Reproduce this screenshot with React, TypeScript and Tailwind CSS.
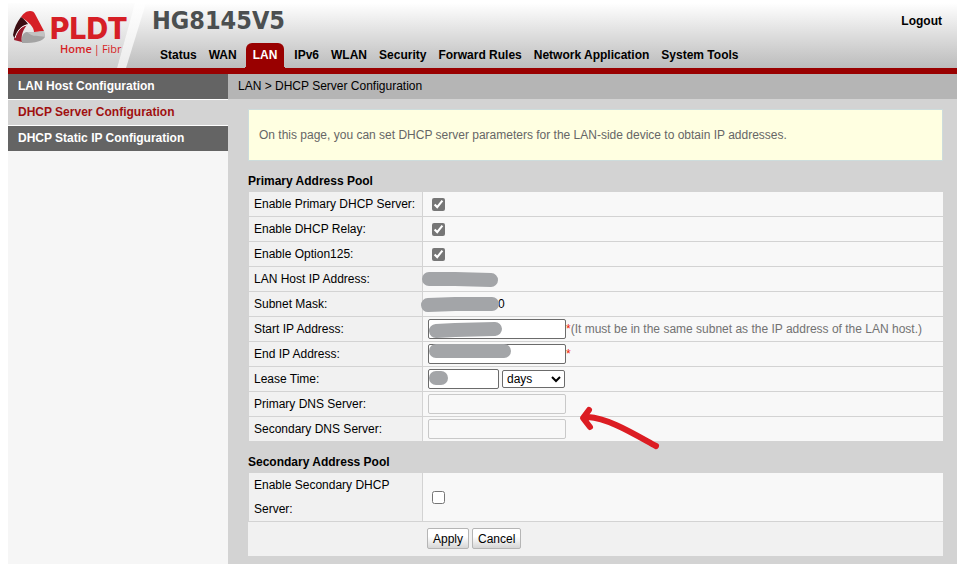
import type { ReactNode } from "react"

const NAV_ITEMS = ["Status", "WAN", "LAN", "IPv6", "WLAN", "Security", "Forward Rules", "Network Application", "System Tools"]
const SIDE_ITEMS = ["LAN Host Configuration", "DHCP Server Configuration", "DHCP Static IP Configuration"]

const ACTIVE_NAV = "LAN"
const ACTIVE_SIDE = "DHCP Server Configuration"

const inputClass = "h-5 rounded-xs border border-[#6b6b6b] bg-white px-1"
const disabledInputClass = "h-5 w-[138px] rounded-xs border border-[#c9c9c9] bg-[#f8f8f8] px-1"
const buttonClass =
    "h-[21px] rounded-xs border border-[#b5b5b5] bg-linear-to-b from-white from-40% to-[#d6d6d6] px-[5px] leading-4"

function Logo() {
    return (
        <div className="relative w-[138px] shrink-0">
            <svg className="absolute inset-0 h-full w-full" viewBox="0 0 138 65" preserveAspectRatio="none" aria-hidden="true">
                <defs>
                    <linearGradient id="panel" x1="0" y1="0" x2="0" y2="1">
                        <stop offset="0" stopColor="#fdfdfd" />
                        <stop offset="1" stopColor="#cccccc" />
                    </linearGradient>
                    <linearGradient id="slash" x1="0" y1="0" x2="0" y2="1">
                        <stop offset="0" stopColor="#ffffff" />
                        <stop offset="1" stopColor="#ececec" />
                    </linearGradient>
                </defs>
                <path d="M0 0H127L109 65H0Z" fill="url(#panel)" />
                <path d="M127 0H138L118 65H109Z" fill="url(#slash)" />
            </svg>
            <div className="relative flex items-start gap-1 pt-2 pl-[5px]">
                <svg width="33" height="33" viewBox="0 0 33 33" aria-hidden="true">
                    <path d="M8 6C10 3 13 0 17 0C20 0 21 1 22 3L31 20L21 21C21 16 16 11 8 6Z" fill="#d61f26" />
                    <path d="M8 6C4 11 1 17 0 24L2 29C3 21 8 15 15 13C13 10 11 8 8 6Z" fill="#3a0d12" />
                    <path d="M14 14C8 15 4 20 1 29L9 31C8 26 9 20 14 14Z" fill="#9e1c2c" />
                    <path d="M14 14C8 15 4 20 2 27" fill="none" stroke="#ffffff" strokeWidth="1" />
                    <path d="M9 32C8 26 10 21 14 21C20 22 26 21 31 20L32 26C29 30 24 32 9 32Z" fill="#a3a3a3" />
                    <path d="M14 21C20 22 26 21 31 20L32 26C26 24 20 27 14 21Z" fill="#c2c2c2" />
                </svg>
                <div className="text-[#d61f26]">
                    <div className="pt-px font-['Inter',sans-serif] text-[30px] leading-8 font-extrabold">PLDT</div>
                    <div className="flex gap-0.5 pl-2.5 font-['Open_Sans',sans-serif] text-[11px] leading-2.5">
                        <span className="font-semibold">Home</span>
                        <span>|</span>
                        <span>Fibr</span>
                    </div>
                </div>
            </div>
        </div>
    )
}

function ActiveTab({ label }: { label: string }) {
    return (
        <a
            href="#"
            className="relative mr-1 ml-[3px] rounded-t-md bg-[#990000] px-[7px] leading-[25px] font-bold text-white before:absolute before:bottom-0 before:-left-[3px] before:size-[3px] before:bg-[radial-gradient(circle_at_0_0,transparent_3px,#990000_3px)] after:absolute after:-right-[3px] after:bottom-0 after:size-[3px] after:bg-[radial-gradient(circle_at_100%_0,transparent_3px,#990000_3px)]"
        >
            {label}
        </a>
    )
}

function Header() {
    return (
        <header className="flex h-[71px] border-b-6 border-[#990000] bg-linear-to-b from-white to-[#bcbcbc]">
            <Logo />
            <div className="flex flex-1 flex-col justify-between pl-1.5">
                <div className="flex items-center justify-between pr-[15px]">
                    <h1 className="font-['DejaVu_Sans_Condensed','DejaVu_Sans',sans-serif] text-[25px] leading-[35px] font-bold text-[#4b4f50]">
                        HG8145V5
                    </h1>
                    <a href="#logout" className="font-bold">
                        Logout
                    </a>
                </div>
                <nav className="flex pl-0.5">
                    {NAV_ITEMS.map((item) =>
                        item === ACTIVE_NAV ? (
                            <ActiveTab key={item} label={item} />
                        ) : (
                            <a key={item} href="#" className="px-1.5 leading-[25px] font-bold">
                                {item}
                            </a>
                        ),
                    )}
                </nav>
            </div>
        </header>
    )
}

function Sidebar() {
    return (
        <aside className="w-[220px] shrink-0 bg-[#f6f6f6]">
            <nav className="flex flex-col gap-px bg-white">
                {SIDE_ITEMS.map((item) => (
                    <a
                        key={item}
                        href="#"
                        className={
                            item === ACTIVE_SIDE
                                ? "bg-[#d3d3d3] pl-2.5 leading-[25px] font-bold text-[#a01010]"
                                : "bg-[#646464] pl-2.5 leading-[25px] font-bold text-white"
                        }
                    >
                        {item}
                    </a>
                ))}
            </nav>
        </aside>
    )
}

// Hand-drawn marker stroke that hides a value
function Marker({ d }: { d: string }) {
    return (
        <svg className="pointer-events-none absolute top-0 -left-2 h-6 w-24" viewBox="0 0 96 24" aria-hidden="true">
            <path d={d} fill="none" stroke="#a3a5a8" strokeWidth="14" strokeLinecap="round" strokeLinejoin="round" />
        </svg>
    )
}

function PoolTable({ title, children }: { title: string; children: ReactNode }) {
    return (
        <section>
            <h2 className="leading-5 font-bold">{title}</h2>
            <div className="pt-px pl-px">
                <table className="w-full table-fixed border-separate border-spacing-0">
                    <tbody>{children}</tbody>
                </table>
            </div>
        </section>
    )
}

function Row({ id, label, children }: { id?: string; label: string; children: ReactNode }) {
    return (
        <tr className="group">
            <th scope="row" className="w-[174px] border-r border-b border-[#d3d3d3] bg-[#f1f1f1] pl-[5px] text-left font-normal group-last:border-b-0">
                <label htmlFor={id} className="block leading-6">
                    {label}
                </label>
            </th>
            <td className="relative border-b border-[#d3d3d3] bg-[#f8f8f8] pl-[5px] group-last:border-b-0">
                <div className="flex items-center">{children}</div>
            </td>
        </tr>
    )
}

function CheckRow({ id, label, checked = false }: { id: string; label: string; checked?: boolean }) {
    return (
        <Row id={id} label={label}>
            <input id={id} type="checkbox" defaultChecked={checked} className="ml-1 size-[13px] accent-[#767676]" />
        </Row>
    )
}

function Arrow() {
    return (
        <svg className="pointer-events-none absolute -bottom-3 left-[328px] h-12 w-[88px]" viewBox="0 0 88 48" aria-hidden="true">
            <path
                d="M80 41C58 29 32 13 12 12M13 5L7 13L14 22"
                fill="none"
                stroke="#dc1d23"
                strokeWidth="6"
                strokeLinecap="round"
                strokeLinejoin="round"
            />
            <path d="M12 5L5 13L14 23L12 13Z" fill="#dc1d23" />
        </svg>
    )
}

export default function App() {
    return (
        <div className="flex min-h-screen flex-col bg-white pt-[3px] pl-2 font-['Liberation_Sans',Arial,sans-serif] text-xs text-black">
            <Header />
            <div className="flex flex-1">
                <Sidebar />
                <main className="flex-1 bg-[#d3d3d3]">
                    <div className="bg-[#b5b5b5] pl-2.5 leading-[25px]">LAN &gt; DHCP Server Configuration</div>

                    <div className="pt-2.5 pr-3.5 pb-2 pl-5">
                        <p className="mb-2.5 border border-[#cddcdc] bg-[#ffffe1] px-2.5 leading-[50px] text-[#666666]">
                            On this page, you can set DHCP server parameters for the LAN-side device to obtain IP addresses.
                        </p>

                        <div className="relative">
                            <PoolTable title="Primary Address Pool">
                                <CheckRow id="primary" label="Enable Primary DHCP Server:" checked />
                                <CheckRow id="relay" label="Enable DHCP Relay:" checked />
                                <CheckRow id="option125" label="Enable Option125:" checked />
                                <Row label="LAN Host IP Address:">
                                    <Marker d="M14 12L40 12L76 13" />
                                </Row>
                                <Row label="Subnet Mask:">
                                    <Marker d="M13 13L40 12L77 12" />
                                    <span className="pl-[70px]">0</span>
                                </Row>
                                <Row id="start-ip" label="Start IP Address:">
                                    <input id="start-ip" type="text" className={`${inputClass} w-[138px]`} />
                                    <Marker d="M21 14L40 13L80 12" />
                                    <span className="text-[#ee2200]">*</span>
                                    <span className="text-[#727272]">(It must be in the same subnet as the IP address of the LAN host.)</span>
                                </Row>
                                <Row id="end-ip" label="End IP Address:">
                                    <input id="end-ip" type="text" className={`${inputClass} w-[138px]`} />
                                    <Marker d="M21 9L50 9L89 9" />
                                    <span className="text-[#ee2200]">*</span>
                                </Row>
                                <Row id="lease" label="Lease Time:">
                                    <input id="lease" type="text" className={`${inputClass} w-[71px]`} />
                                    <Marker d="M21 11L26 11" />
                                    <select
                                        aria-label="Lease time unit"
                                        className="ml-[3px] h-[18px] w-[63px] appearance-auto rounded-xs border border-[#6b6b6b] bg-white"
                                    >
                                        <option>days</option>
                                        <option>hours</option>
                                        <option>minutes</option>
                                    </select>
                                </Row>
                                <Row id="dns1" label="Primary DNS Server:">
                                    <input id="dns1" type="text" disabled className={disabledInputClass} />
                                </Row>
                                <Row id="dns2" label="Secondary DNS Server:">
                                    <input id="dns2" type="text" disabled className={disabledInputClass} />
                                </Row>
                            </PoolTable>
                            <Arrow />
                        </div>

                        <div className="mt-[11px]">
                            <PoolTable title="Secondary Address Pool">
                                <CheckRow id="secondary" label="Enable Secondary DHCP Server:" />
                            </PoolTable>
                        </div>

                        <div className="mt-px flex gap-[3px] bg-[#f1f1f1] pt-1.5 pb-[7px] pl-[179px]">
                            <button type="button" className={buttonClass}>
                                Apply
                            </button>
                            <button type="button" className={buttonClass}>
                                Cancel
                            </button>
                        </div>
                    </div>
                </main>
            </div>
        </div>
    )
}
